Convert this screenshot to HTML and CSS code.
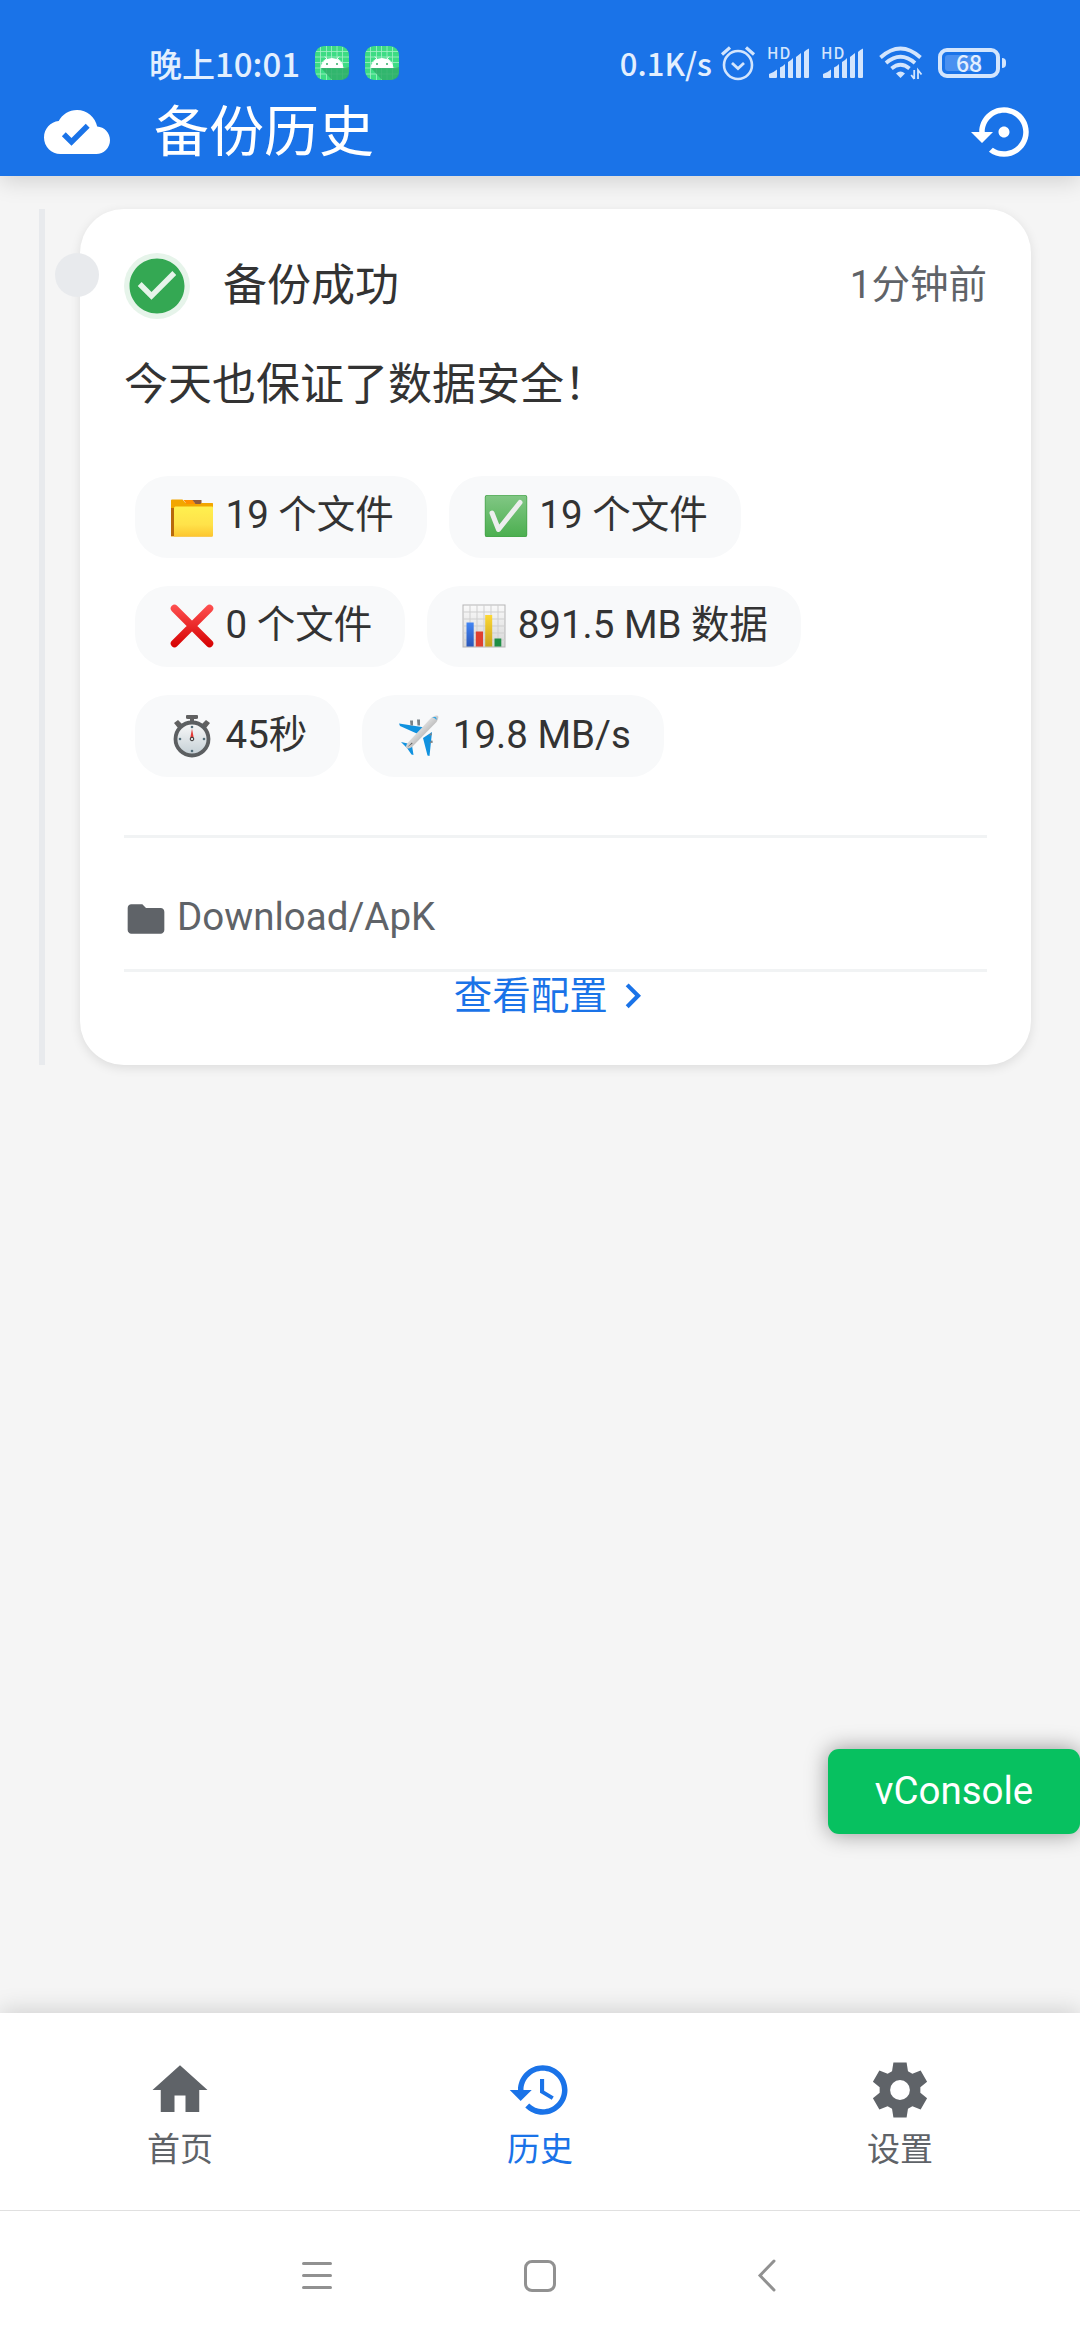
FILE: index.html
```html
<!DOCTYPE html>
<html lang="zh-CN">
<head>
<meta charset="utf-8">
<title>备份历史</title>
<link rel="stylesheet" href="styles.css">
</head>
<body>
<header class="header">
  <div class="status">
    <span class="status-time">晚上10:01</span>
    <svg class="app-badge" viewBox="0 0 34 34"><use href="#android"/></svg>
    <svg class="app-badge" viewBox="0 0 34 34"><use href="#android"/></svg>
    <span class="status-speed">0.1K/s</span>
    <svg class="alarm" width="36" height="36" viewBox="0 0 36 36" fill="none" stroke="#d3e5fd" stroke-width="2.6"><circle cx="18" cy="20" r="14"/><path d="M12 18l6 5.500 6-5.500" stroke-width="2.800"/><path d="M2 9.500L10 2.500M34 9.500L26 2.500" stroke-width="3.200"/></svg>
    <span class="signal">
      <svg width="42" height="30" viewBox="0 0 42 30" fill="#d3e5fd"><use href="#bars"/></svg>
      <span class="hd">HD</span>
    </span>
    <span class="signal">
      <svg width="42" height="30" viewBox="0 0 42 30" fill="#d3e5fd"><use href="#bars"/></svg>
      <span class="hd">HD</span>
    </span>
    <svg class="wifi" width="44" height="34" viewBox="0 0 44 34" fill="none" stroke="#d3e5fd" stroke-width="3.800"><path d="M1.500 11.500Q21.500-6.500 41.500 11.500M7 17Q21.500 4.500 36 17M12.500 22.500Q21.500 15 30.500 22.500"/><path d="M17 27.500q4.500-4 9 0L21.500 32z" fill="#d3e5fd" stroke="none"/><path d="M35.200 24v9M35.200 33l-3-4M39 33v-9l3.500 4.500" stroke-width="1.800"/></svg>
    <span class="battery"><span class="battery-box"><i class="battery-fill"></i><b class="battery-num">68</b></span><i class="battery-tip"></i></span>
  </div>
  <div class="appbar">
    <svg class="icon" viewBox="0 0 24 24"><path d="M19.350 10.040C18.670 6.590 15.640 4 12 4 9.110 4 6.600 5.640 5.350 8.040 2.340 8.360 0 10.910 0 14c0 3.310 2.690 6 6 6h13c2.760 0 5-2.240 5-5 0-2.640-2.050-4.780-4.650-4.960zM10 17l-3.500-3.500 1.410-1.410L10 14.170 15.180 9l1.410 1.410L10 17z"/></svg>
    <h1 class="title">备份历史</h1>
    <svg class="icon" viewBox="0 0 24 24"><path d="M14 12c0-1.100-.9-2-2-2s-2 .9-2 2 .9 2 2 2 2-.9 2-2zm-2-9c-4.970 0-9 4.030-9 9H0l4 4 4-4H5c0-3.870 3.130-7 7-7s7 3.130 7 7-3.130 7-7 7c-1.510 0-2.910-.49-4.060-1.300l-1.420 1.440C8.040 20.300 9.940 21 12 21c4.970 0 9-4.030 9-9s-4.030-9-9-9z"/></svg>
  </div>
</header>

<main class="content">
  <div class="timeline">
    <article class="card">
      <i class="timeline-dot"></i>
      <div class="card-head">
        <svg class="icon success" viewBox="0 0 24 24"><path d="M12 2C6.480 2 2 6.480 2 12s4.480 10 10 10 10-4.480 10-10S17.520 2 12 2zm-2 15l-5-5 1.410-1.410L10 14.170l7.590-7.590L19 8l-9 9z"/></svg>
        <h2 class="card-title">备份成功</h2>
        <time class="card-time">1分钟前</time>
      </div>
      <p class="message">今天也保证了数据安全&#xFF01;</p>
      <div class="chips">
        <span class="chip"><svg class="emoji" viewBox="0 0 48 44"><path d="M3 6.500q0-1 1-1h10.500l3 3.500h27v33.500H3z" fill="#f2a600"/><path d="M15.500 6h9.500l2.500 4H18.500z" fill="#ff8f00"/><path d="M24.500 6H33.500V10H27.500z" fill="#8d5b3f"/><path d="M33 9h11q1 0 1 1v4H31z" fill="#f2a600"/><path d="M3 14l3 0v28H3z" fill="#b8690b"/><path d="M7.500 12.500H44q1 0 1 1V41q0 1.500-1.500 1.500H6V14q0-1.500 1.500-1.500z" fill="url(#folder)"/></svg>19 个文件</span>
        <span class="chip"><svg class="emoji" viewBox="0 0 48 44"><rect x="2.800" y=".9" width="42.400" height="42.200" rx="2.200" fill="#43a047"/><rect x="3.500" y="1.600" width="41" height="40.800" rx="2" fill="url(#green)"/><path d="M10 19l6.500 16.500L38 8.500" fill="none" stroke="#edeeee" stroke-width="5" stroke-linecap="round" stroke-linejoin="round"/></svg>19 个文件</span>
        <span class="chip"><svg class="emoji" viewBox="0 0 48 44"><path d="M6.500 4.500l35 35M41.500 4.500l-35 35" stroke="url(#red)" stroke-width="7.500" stroke-linecap="round"/></svg>0 个文件</span>
        <span class="chip"><svg class="emoji" viewBox="0 0 48 44"><rect x="3" y="1" width="42" height="42" fill="url(#sheet)" stroke="#b5b5b5"/><path d="M10 1v42M17 1v42M24 1v42M31 1v42M38 1v42M3 8h42M3 15h42M3 22h42M3 29h42M3 36h42" stroke="#cfcfcf"/><path d="M6.500 18.500h7.200V42.500H6.500z" fill="url(#barblue)"/><path d="M15.800 27.500H23v15h-7.200z" fill="#e0402f"/><path d="M25.200 11h7v31.500h-7z" fill="url(#baryellow)"/><path d="M34.500 34.500h6.800v8h-6.800z" fill="#1e8e45"/></svg>891.5 MB 数据</span>
        <span class="chip"><svg class="emoji" viewBox="0 0 48 44"><path d="M19 1h10q1 0 1 1v2q0 1-2 1h-2v4h-4V5h-2q-2 0-2-1V2q0-1 1-1zM6 9l4-3 4 4-4 4zM42 9l-4-3-4 4 4 4z" fill="#616161"/><circle cx="24" cy="25" r="16.500" fill="url(#face)" stroke="#5c5f61" stroke-width="3.800"/><path d="M24 14.500l1.800 10h-3.600z" fill="#e53935"/><circle cx="24" cy="25" r="1.800" fill="#ddd" stroke="#333"/><g fill="#546e7a"><circle cx="24" cy="13" r="1.300"/><circle cx="24" cy="37" r="1.300"/><circle cx="12" cy="25" r="1.300"/><circle cx="36" cy="25" r="1.300"/></g></svg>45秒</span>
        <span class="chip"><svg class="emoji" viewBox="0 0 48 44"><path d="M4 9.500l26 4-6 7L5 12zM37 18l-9 6 4.500 17.500 2 .5zM6 28l9 2-3 4zM17 31.500l1.500 9.500-2-.5L12 34z" fill="#1192df"/><path d="M15 6.500l3 0v5h-2.500zM22 5.500l3 0v6l-2.500 0zM36 18.500l1 2.500-3 1zM37 26l1 2.500-4 1z" fill="#7b8388"/><path d="M35 5q4-4 7-3.500T41.500 8L17 33q-4 2.500-5.500 1T13 28.500z" fill="url(#plane)"/><path d="M36.500 4q2.500-1.500 4-1t1 3q-2-3-5-2z" fill="#29a3e6"/><path d="M12 33.500l5-5 .5 1z" fill="#555"/></svg>19.8 MB/s</span>
      </div>
      <div class="path"><svg class="folder" viewBox="0 0 24 24"><path d="M10 4H4c-1.100 0-1.990.9-1.990 2L2 18c0 1.100.9 2 2 2h16c1.100 0 2-.9 2-2V8c0-1.100-.9-2-2-2h-8l-2-2z"/></svg><span class="path-name">Download/ApK</span></div>
      <a class="config"><span class="config-label">查看配置</span><svg class="chevron" viewBox="0 0 24 24"><path d="M10 6L8.590 7.410 13.170 12l-4.580 4.590L10 18l6-6z"/></svg></a>
    </article>
  </div>
  <button class="vconsole">vConsole</button>
</main>

<nav class="tabs">
  <a class="tab"><svg class="icon" viewBox="0 0 24 24"><path d="M10 20v-6h4v6h5v-8h3L12 3 2 12h3v8z"/></svg>首页</a>
  <a class="tab tab-active"><svg class="icon" viewBox="0 0 24 24"><path d="M13 3c-4.970 0-9 4.030-9 9H1l3.890 3.890.07.14L9 12H6c0-3.870 3.130-7 7-7s7 3.130 7 7-3.130 7-7 7c-1.930 0-3.680-.79-4.940-2.060l-1.420 1.420C8.270 19.990 10.510 21 13 21c4.970 0 9-4.030 9-9s-4.030-9-9-9zm-1 5v5l4.280 2.540.72-1.210-3.500-2.080V8H12z"/></svg>历史</a>
  <a class="tab"><svg class="icon" viewBox="0 0 24 24"><path fill-rule="evenodd" d="M9.600 2h4.800l.5 3.150 1.600.95 3-1.150 2.350 4.050-2.450 2v2l2.450 2-2.350 4.050-3-1.150-1.600.95-.5 3.150H9.600l-.5-3.150-1.600-.95-3 1.150L2.150 15l2.450-2v-2L2.150 9 4.500 4.950l3 1.150 1.600-.95zM12 8.400a3.600 3.600 0 1 0 0 7.200 3.600 3.600 0 0 0 0-7.200z"/></svg>设置</a>
</nav>
<footer class="sysnav">
  <svg viewBox="0 0 36 36"><path d="M4.500 5.500h27M4.500 17.500h27M4.500 29.500h27" stroke-linecap="round"/></svg>
  <svg viewBox="0 0 36 36"><rect x="3.500" y="3.500" width="29" height="29" rx="6.500"/></svg>
  <svg viewBox="0 0 36 36"><path d="M29 3L15 17.500l14 14.500" stroke-linecap="round"/></svg>
</footer>

<svg class="defs" width="0" height="0">
  <defs>
    <linearGradient id="folder" x2="0" y2="1"><stop stop-color="#fff04f"/><stop offset=".6" stop-color="#ffe24a"/><stop offset="1" stop-color="#fcc62f"/></linearGradient>
    <linearGradient id="green" x2="0" y2="1"><stop stop-color="#81c784"/><stop offset="1" stop-color="#4caf50"/></linearGradient>
    <linearGradient id="red" gradientUnits="userSpaceOnUse" x1="0" y1="0" x2="0" y2="44"><stop stop-color="#ff5252"/><stop offset="1" stop-color="#d50000"/></linearGradient>
    <linearGradient id="sheet" x2="0" y2="1"><stop stop-color="#fafafa"/><stop offset="1" stop-color="#d5d5d5"/></linearGradient>
    <linearGradient id="barblue" x2="0" y2="1"><stop stop-color="#4285f4"/><stop offset="1" stop-color="#2a56b8"/></linearGradient>
    <linearGradient id="baryellow" x2="0" y2="1"><stop stop-color="#fdd835"/><stop offset="1" stop-color="#c9a31c"/></linearGradient>
    <linearGradient id="face" x2="0" y2="1"><stop stop-color="#fafafa"/><stop offset="1" stop-color="#c3ced4"/></linearGradient>
    <linearGradient id="plane" x1="0" y1="0" x2="1" y2="1"><stop offset=".3" stop-color="#f3f3f3"/><stop offset=".7" stop-color="#a9a9a9"/></linearGradient>
    <symbol id="bars" viewBox="0 0 42 30"><path d="M1 29v-3q4-1 8-4.500V29q0 1-1 1H2q-1 0-1-1zM12 19.500q3-1 5-3.500v14h-4q-1 0-1-1zM20 14q3-1.500 5-4v20h-4q-1 0-1-1zM28 9q2-1.500 5-4v24q0 1-1 1h-3q-1 0-1-1zM36 4q2-2.500 5-3.500V29q0 1-1 1h-3q-1 0-1-1z"/></symbol>
    <symbol id="android" viewBox="0 0 34 34"><rect width="34" height="34" rx="9" fill="#3ddc84"/><path d="M5.500 1v32M11.500 0v34M16.500 0v34M22 0v34M27.500 1v32M1 5.500h32M0 11h34M0 16.500h34M0 22h34M1 28h32" stroke="#a4f0c6" stroke-width=".8"/><path d="M6 22h22l6-1v5q0 8-9 8h-8z" fill="#2faf68" opacity=".85"/><path d="M6 22q1-8 6-9l-2-2.500M28 22q-1-8-6-9l2-2.500" fill="none" stroke="#fff" stroke-width=".9"/><path d="M6 22q1.500-10 11-10t11 10z" fill="#fff"/><circle cx="12" cy="18" r="1" fill="#2faf68"/><circle cx="22" cy="18" r="1" fill="#2faf68"/></symbol>
  </defs>
</svg>
</body>
</html>
```
FILE: styles.css
```css
* { box-sizing: border-box; }

body {
  margin: 0;
  width: 1080px;
  height: 2340px;
  display: flex;
  flex-direction: column;
  overflow: hidden;
  background: #f5f5f5;
  color: #333;
  font-family: Roboto, "Noto Sans CJK SC", sans-serif;
  font-size: 38.5px;
}

svg { display: block; flex: none; }
.defs { position: absolute; }
.icon { width: 66px; height: 66px; fill: currentColor; }

/* header */
.header {
  position: relative;
  height: 176px;
  background: #1a73e8;
  color: #fff;
  box-shadow: 0 5px 22px rgba(0, 0, 0, .15);
}
.status {
  height: 99px;
  padding: 27px 74px 0 149px;
  display: flex;
  align-items: center;
  color: #e3effe;
}
.status-time { width: 166px; font: 500 33px/38px "Noto Sans CJK SC", sans-serif; white-space: nowrap; }
.app-badge { width: 34px; height: 34px; margin-right: 16px; }
.status-speed { margin-left: auto; font: 500 31px/38px "Noto Sans CJK SC", sans-serif; }
.alarm { margin-left: 8px; }
.signal { position: relative; margin-left: 12px; }
.hd {
  position: absolute;
  left: -1px;
  top: -4px;
  font: 500 15.5px/16px "Noto Sans CJK SC", sans-serif;
  letter-spacing: 1px;
  color: #d3e5fd;
}
.wifi { margin-left: 15px; }
.battery { display: flex; align-items: center; gap: 2px; margin-left: 15px; }
.battery-box {
  display: grid;
  width: 62px;
  height: 30px;
  border: 4px solid #d3e5fd;
  border-radius: 9px;
}
.battery-fill, .battery-num { grid-area: 1 / 1; }
.battery-fill { width: 36px; margin: 3px; border-radius: 3px; background: #4a90f0; }
.battery-num { font: 500 23px/21px "Noto Sans CJK SC", sans-serif; text-align: center; }
.battery-tip { width: 4px; height: 10px; border-radius: 0 4px 4px 0; background: #d3e5fd; }

.appbar {
  height: 66px;
  padding: 0 43px 0 44px;
  display: flex;
  align-items: center;
}
.title { margin: 0 auto 0 44px; font-size: 55px; line-height: 65px; font-weight: 400; }

/* timeline */
.content { flex: 1; position: relative; padding: 33px 49px 0 39px; }
.timeline { height: 856px; border-left: 6px solid #e8eaed; padding-left: 35px; }
.card {
  position: relative;
  height: 856px;
  padding: 44px 44px 0;
  border-radius: 44px;
  background: #fff;
  box-shadow: 0 3px 11px rgba(0, 0, 0, .1);
}
.timeline-dot {
  position: absolute;
  left: -25px;
  top: 44px;
  width: 44px;
  height: 44px;
  border-radius: 50%;
  background: #e8eaed;
}
.card-head { display: flex; align-items: center; height: 66px; }
.success { border-radius: 50%; background: #e6f4ea; color: #34a853; }
.card-title { margin: 0 auto 0 33px; font-size: 44px; line-height: 66px; font-weight: 400; }
.card-time { padding-bottom: 10px; color: #5f6368; }
.message { margin: 33px 0 0; font-size: 44px; line-height: 66px; }

.chips {
  display: flex;
  flex-wrap: wrap;
  gap: 28px 22px;
  padding: 58px 11px;
  height: 417px;
  align-content: flex-start;
}
.chip {
  display: flex;
  align-items: center;
  gap: 9.5px;
  height: 81.7px;
  padding: 0 33px 3px;
  border-radius: 33px;
  background: #f8f9fa;
  line-height: 60px;
  white-space: nowrap;
}
.emoji { width: 48px; height: 44px; margin-top: 2px; }

.path {
  display: flex;
  align-items: center;
  gap: 9px;
  height: 134px;
  padding-top: 30px;
  border-top: 3px solid #f1f3f4;
  color: #5f6368;
}
.path-name { padding-bottom: 4px; }
.folder { width: 44px; height: 44px; fill: currentColor; }
.config {
  display: flex;
  align-items: center;
  justify-content: center;
  height: 51px;
  border-top: 3px solid #f1f3f4;
  color: #1a73e8;
}
.config-label { padding-bottom: 8px; }
.chevron { width: 49.5px; height: 49.5px; fill: currentColor; }

.vconsole {
  position: absolute;
  right: 0;
  bottom: 179px;
  width: 252px;
  height: 85px;
  padding: 0 0 1px;
  border: 0;
  border-radius: 11px;
  background: #07c160;
  color: #fff;
  font: 38.5px/84px Roboto, sans-serif;
  box-shadow: 0 0 22px rgba(0, 0, 0, .4);
}

/* bottom navigation */
.tabs {
  position: relative;
  display: flex;
  height: 197px;
  background: #fff;
  box-shadow: 0 -3px 22px rgba(0, 0, 0, .15);
}
.tab {
  flex: 1;
  display: flex;
  flex-direction: column;
  align-items: center;
  padding-top: 44px;
  color: #5f6368;
  font-size: 33px;
  line-height: 54px;
}
.tab-active { color: #1a73e8; }
.sysnav {
  position: relative;
  display: flex;
  justify-content: center;
  align-items: center;
  gap: 187px;
  height: 130px;
  border-top: 1px solid #e0e0e0;
  background: #fff;
}
.sysnav svg { width: 36px; height: 36px; fill: none; stroke: #919191; stroke-width: 3; }
```
